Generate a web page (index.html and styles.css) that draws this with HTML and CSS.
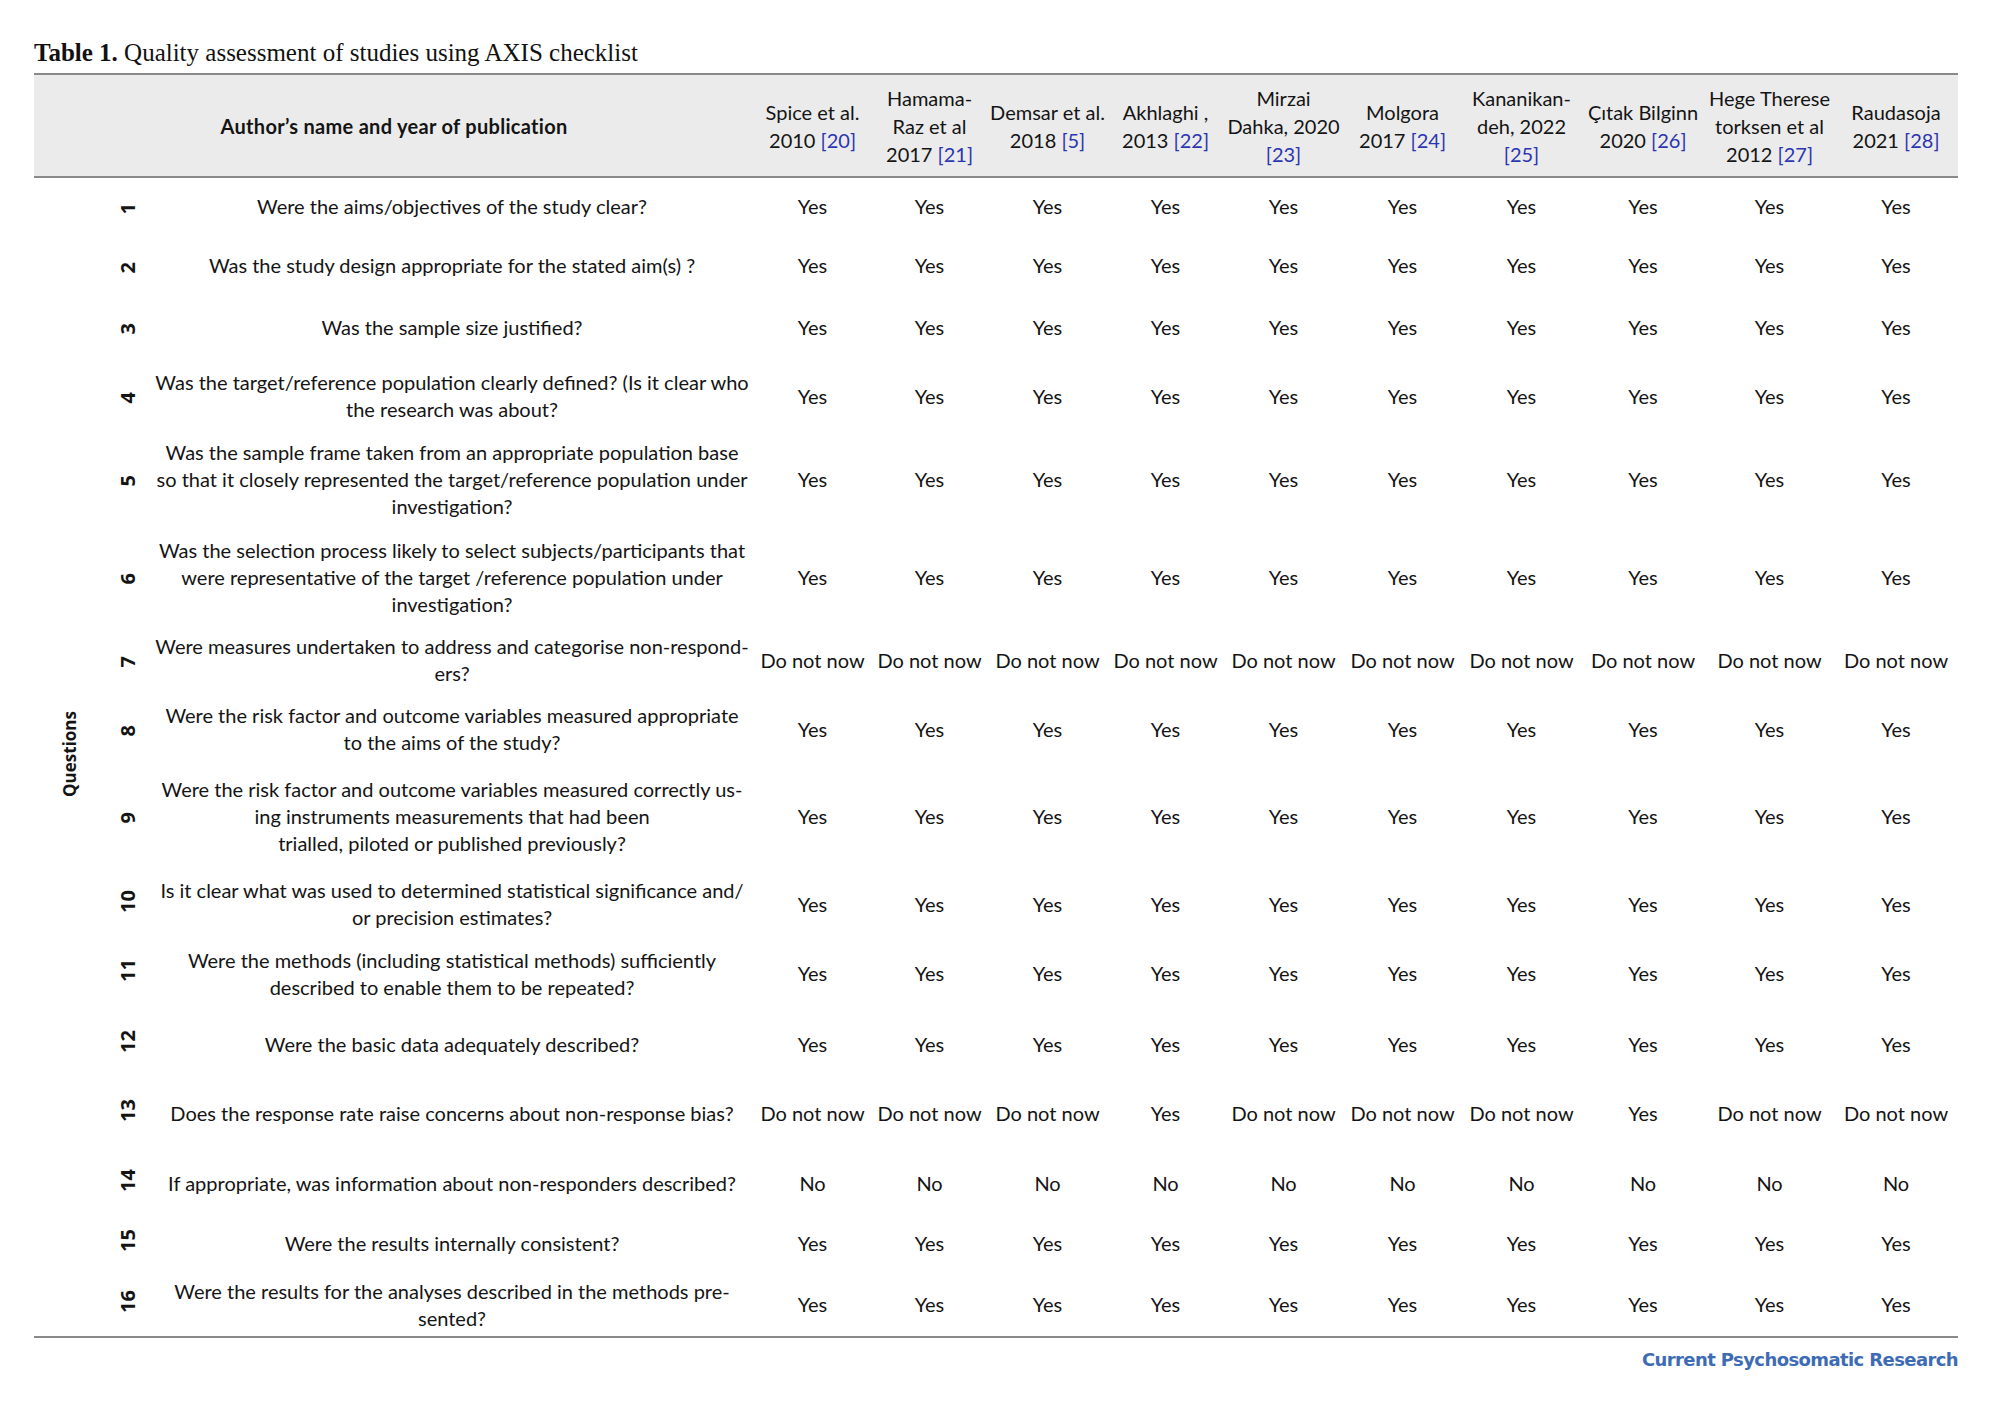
FILE: index.html
```html
<!DOCTYPE html>
<html lang="en">
<head>
<meta charset="utf-8">
<title>Table 1. Quality assessment of studies using AXIS checklist</title>
<link rel="stylesheet" href="styles.css">
</head>
<body>
<div class="page">
  <div class="caption"><b>Table 1.</b> Quality assessment of studies using AXIS checklist</div>
  <table class="axis">
    <colgroup>
      <col class="c-label"><col class="c-num"><col class="c-q">
      <col class="c-a"><col class="c-a"><col class="c-b"><col class="c-a"><col class="c-b">
      <col class="c-b"><col class="c-b"><col class="c-c"><col class="c-d"><col class="c-c">
    </colgroup>
    <thead>
      <tr>
        <th colspan="3" class="author">Author’s name and year of publication</th>
        <th>Spice et al.<br>2010 <span class="ref">[20]</span></th>
        <th>Hamama-<br>Raz et al<br>2017 <span class="ref">[21]</span></th>
        <th>Demsar et al.<br>2018 <span class="ref">[5]</span></th>
        <th>Akhlaghi ,<br>2013 <span class="ref">[22]</span></th>
        <th>Mirzai<br>Dahka, 2020<br><span class="ref">[23]</span></th>
        <th>Molgora<br>2017 <span class="ref">[24]</span></th>
        <th>Kananikan-<br>deh, 2022<br><span class="ref">[25]</span></th>
        <th>Çıtak Bilginn<br>2020 <span class="ref">[26]</span></th>
        <th>Hege Therese<br>torksen et al<br>2012 <span class="ref">[27]</span></th>
        <th>Raudasoja<br>2021 <span class="ref">[28]</span></th>
      </tr>
    </thead>
    <tbody>
      <tr>
        <td rowspan="16" class="qlabel"><span class="vert">Questions</span></td>
        <td class="num"><span class="vert">1</span></td>
        <td class="q">Were the aims/objectives of the study clear?</td>
        <td>Yes</td><td>Yes</td><td>Yes</td><td>Yes</td><td>Yes</td><td>Yes</td><td>Yes</td><td>Yes</td><td>Yes</td><td>Yes</td>
      </tr>
      <tr>
        <td class="num"><span class="vert">2</span></td>
        <td class="q">Was the study design appropriate for the stated aim(s) ?</td>
        <td>Yes</td><td>Yes</td><td>Yes</td><td>Yes</td><td>Yes</td><td>Yes</td><td>Yes</td><td>Yes</td><td>Yes</td><td>Yes</td>
      </tr>
      <tr>
        <td class="num"><span class="vert">3</span></td>
        <td class="q">Was the sample size justified?</td>
        <td>Yes</td><td>Yes</td><td>Yes</td><td>Yes</td><td>Yes</td><td>Yes</td><td>Yes</td><td>Yes</td><td>Yes</td><td>Yes</td>
      </tr>
      <tr>
        <td class="num"><span class="vert">4</span></td>
        <td class="q">Was the target/reference population clearly defined? (Is it clear who<br>the research was about?</td>
        <td>Yes</td><td>Yes</td><td>Yes</td><td>Yes</td><td>Yes</td><td>Yes</td><td>Yes</td><td>Yes</td><td>Yes</td><td>Yes</td>
      </tr>
      <tr>
        <td class="num"><span class="vert">5</span></td>
        <td class="q">Was the sample frame taken from an appropriate population base<br>so that it closely represented the target/reference population under<br>investigation?</td>
        <td>Yes</td><td>Yes</td><td>Yes</td><td>Yes</td><td>Yes</td><td>Yes</td><td>Yes</td><td>Yes</td><td>Yes</td><td>Yes</td>
      </tr>
      <tr>
        <td class="num"><span class="vert">6</span></td>
        <td class="q">Was the selection process likely to select subjects/participants that<br>were representative of the target /reference population under<br>investigation?</td>
        <td>Yes</td><td>Yes</td><td>Yes</td><td>Yes</td><td>Yes</td><td>Yes</td><td>Yes</td><td>Yes</td><td>Yes</td><td>Yes</td>
      </tr>
      <tr>
        <td class="num"><span class="vert">7</span></td>
        <td class="q">Were measures undertaken to address and categorise non-respond-<br>ers?</td>
        <td>Do not now</td><td>Do not now</td><td>Do not now</td><td>Do not now</td><td>Do not now</td><td>Do not now</td><td>Do not now</td><td>Do not now</td><td>Do not now</td><td>Do not now</td>
      </tr>
      <tr>
        <td class="num"><span class="vert">8</span></td>
        <td class="q">Were the risk factor and outcome variables measured appropriate<br>to the aims of the study?</td>
        <td>Yes</td><td>Yes</td><td>Yes</td><td>Yes</td><td>Yes</td><td>Yes</td><td>Yes</td><td>Yes</td><td>Yes</td><td>Yes</td>
      </tr>
      <tr>
        <td class="num"><span class="vert">9</span></td>
        <td class="q">Were the risk factor and outcome variables measured correctly us-<br>ing instruments measurements that had been<br>trialled, piloted or published previously?</td>
        <td>Yes</td><td>Yes</td><td>Yes</td><td>Yes</td><td>Yes</td><td>Yes</td><td>Yes</td><td>Yes</td><td>Yes</td><td>Yes</td>
      </tr>
      <tr>
        <td class="num"><span class="vert">10</span></td>
        <td class="q">Is it clear what was used to determined statistical significance and/<br>or precision estimates?</td>
        <td>Yes</td><td>Yes</td><td>Yes</td><td>Yes</td><td>Yes</td><td>Yes</td><td>Yes</td><td>Yes</td><td>Yes</td><td>Yes</td>
      </tr>
      <tr>
        <td class="num"><span class="vert">11</span></td>
        <td class="q">Were the methods (including statistical methods) sufficiently<br>described to enable them to be repeated?</td>
        <td>Yes</td><td>Yes</td><td>Yes</td><td>Yes</td><td>Yes</td><td>Yes</td><td>Yes</td><td>Yes</td><td>Yes</td><td>Yes</td>
      </tr>
      <tr>
        <td class="num"><span class="vert">12</span></td>
        <td class="q">Were the basic data adequately described?</td>
        <td>Yes</td><td>Yes</td><td>Yes</td><td>Yes</td><td>Yes</td><td>Yes</td><td>Yes</td><td>Yes</td><td>Yes</td><td>Yes</td>
      </tr>
      <tr>
        <td class="num"><span class="vert">13</span></td>
        <td class="q">Does the response rate raise concerns about non-response bias?</td>
        <td>Do not now</td><td>Do not now</td><td>Do not now</td><td>Yes</td><td>Do not now</td><td>Do not now</td><td>Do not now</td><td>Yes</td><td>Do not now</td><td>Do not now</td>
      </tr>
      <tr>
        <td class="num"><span class="vert">14</span></td>
        <td class="q">If appropriate, was information about non-responders described?</td>
        <td>No</td><td>No</td><td>No</td><td>No</td><td>No</td><td>No</td><td>No</td><td>No</td><td>No</td><td>No</td>
      </tr>
      <tr>
        <td class="num"><span class="vert">15</span></td>
        <td class="q">Were the results internally consistent?</td>
        <td>Yes</td><td>Yes</td><td>Yes</td><td>Yes</td><td>Yes</td><td>Yes</td><td>Yes</td><td>Yes</td><td>Yes</td><td>Yes</td>
      </tr>
      <tr>
        <td class="num"><span class="vert">16</span></td>
        <td class="q">Were the results for the analyses described in the methods pre-<br>sented?</td>
        <td>Yes</td><td>Yes</td><td>Yes</td><td>Yes</td><td>Yes</td><td>Yes</td><td>Yes</td><td>Yes</td><td>Yes</td><td>Yes</td>
      </tr>
    </tbody>
  </table>
  <div class="brand">Current Psychosomatic Research</div>
</div>
</body>
</html>
```
FILE: styles.css
```css
html, body {
  margin: 0;
  padding: 0;
  background: #ffffff;
}

.page {
  width: 1924px;
  padding: 38px 0 0 34px;
  color: #141414;
  font-family: Lato, "Open Sans", "Liberation Sans", sans-serif;
}

.caption {
  font-family: "Liberation Serif", "Times New Roman", serif;
  font-size: 25px;
  line-height: 30px;
  height: 30px;
  margin-bottom: 5px;
  color: #111;
  white-space: nowrap;
}

.caption b {
  font-weight: 700;
}

.axis {
  width: 1924px;
  table-layout: fixed;
  border-collapse: collapse;
  font-size: 20px;
  line-height: 27px;
}

.c-label { width: 72px; }
.c-num { width: 44px; }
.c-q { width: 604px; }
.c-a { width: 117px; }
.c-b { width: 119px; }
.c-c { width: 124px; }
.c-d { width: 129px; }

.axis thead tr {
  height: 103px;
  background: #ebebeb;
}

.axis th {
  font-weight: 400;
  padding: 0;
  line-height: 28px;
  text-align: center;
  vertical-align: middle;
  white-space: nowrap;
  border-top: 2px solid #8a8a8a;
  border-bottom: 2px solid #8a8a8a;
}

.axis th.author {
  font-weight: 700;
  letter-spacing: 0.3px;
}

.ref {
  color: #2b35b0;
}

.axis td {
  padding: 0;
  text-align: center;
  vertical-align: middle;
  white-space: nowrap;
}

.axis tbody tr:last-child td {
  border-bottom: 2px solid #8a8a8a;
  padding-top: 12px;
}

.vert {
  display: inline-block;
  writing-mode: vertical-rl;
  transform: rotate(180deg);
  font-family: "Open Sans", "DejaVu Sans", sans-serif;
  font-weight: 700;
}

.qlabel .vert {
  font-size: 17px;
  line-height: 22px;
}

.num .vert {
  font-size: 20px;
  line-height: 22px;
}

.axis td.qlabel {
  padding-top: 0;
  border-bottom: 2px solid #8a8a8a;
}

.axis tbody tr:nth-child(1) { height: 58px; }
.axis tbody tr:nth-child(2) { height: 61px; }
.axis tbody tr:nth-child(3) { height: 62px; }
.axis tbody tr:nth-child(4) { height: 76px; }
.axis tbody tr:nth-child(5) { height: 90px; }
.axis tbody tr:nth-child(6) { height: 106px; }
.axis tbody tr:nth-child(7) { height: 60px; }
.axis tbody tr:nth-child(8) { height: 78px; }
.axis tbody tr:nth-child(9) { height: 96px; }
.axis tbody tr:nth-child(10) { height: 80px; }
.axis tbody tr:nth-child(11) { height: 59px; }
.axis tbody tr:nth-child(12) { height: 82px; }
.axis tbody tr:nth-child(13) { height: 57px; }
.axis tbody tr:nth-child(14) { height: 83px; }
.axis tbody tr:nth-child(15) { height: 36px; }
.axis tbody tr:nth-child(16) { height: 76px; }

.brand {
  margin-top: 10px;
  text-align: right;
  font-family: "DejaVu Sans", sans-serif;
  font-weight: 700;
  font-size: 18px;
  line-height: 24px;
  letter-spacing: -0.6px;
  color: #3d6cb4;
}
```
